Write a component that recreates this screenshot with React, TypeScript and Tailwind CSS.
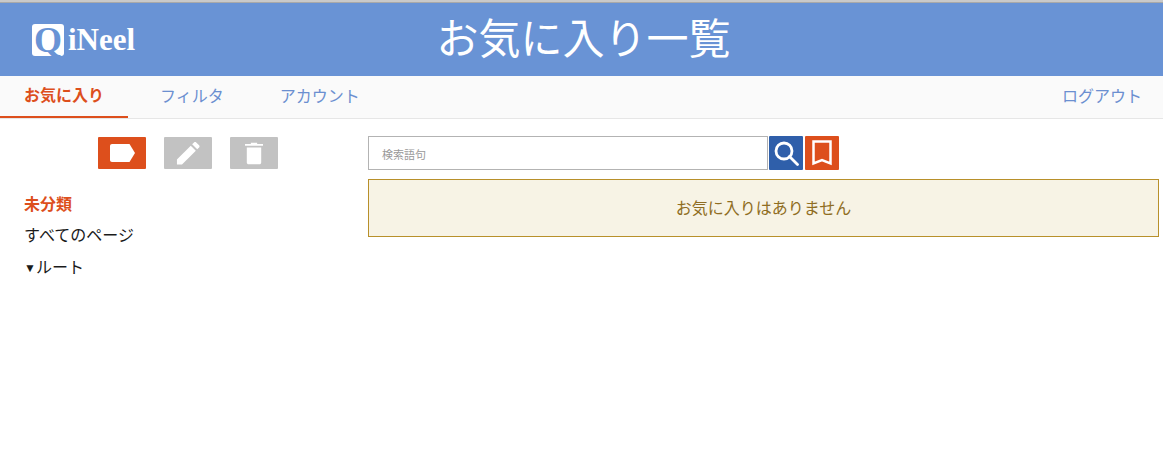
const jp = "font-['Liberation_Sans','Noto_Sans_CJK_JP',sans-serif]";

function Tab({ label, active }: { label: string; active?: boolean }) {
  return (
    <div
      className={
        active
          ? "h-[42px] px-6 flex items-center text-base font-bold text-[#dd4f1c] border-b-2 border-[#dd4f1c]"
          : "h-[42px] px-6 flex items-center text-base text-[#6b8fd0]"
      }
    >
      {label}
    </div>
  );
}

export default function App() {
  return (
    <div className={`${jp} w-[1163px] h-[450px] bg-white overflow-hidden`}>
      <div className="h-[3px] bg-[#c9c9c9] border-b border-[#a9a9a9]" />
      <header className="relative h-[73px] bg-[#6993d5] flex items-center justify-center">
        <div className="absolute left-8 top-[21px] flex items-center">
          <div className="w-8 h-8 rounded-[3px] bg-white flex items-center justify-center text-[#6993d5] text-[36px] leading-8 font-bold font-['Liberation_Serif',serif]">
            Q
          </div>
          <span className="ml-[4px] text-white text-[31px] leading-8 font-bold font-['Liberation_Serif',serif]">iNeel</span>
        </div>
        <h1 className="text-[42px] leading-[56px] font-normal text-white ml-[4px]">お気に入り一覧</h1>
      </header>
      <nav className="h-[43px] bg-[#fafafa] border-b border-[#e6e6e6] flex gap-2">
        <Tab label="お気に入り" active />
        <Tab label="フィルタ" />
        <Tab label="アカウント" />
        <div className="ml-auto pr-[21px] h-[42px] flex items-center text-base text-[#6b8fd0]">ログアウト</div>
      </nav>
      <div className="flex">
        <aside className="w-[368px] shrink-0 pt-[18px]">
          <div className="flex gap-[18px] pl-[98px]">
            <div className="w-12 h-8 rounded-[1px] bg-[#dd4f1c] flex items-center justify-center">
              <svg width="25" height="18" viewBox="0 0 25 18" fill="#fff">
                <path d="M2 0H19.500L25 9L19.500 18H2C.9 18 0 17.100 0 16V2C0 .9.9 0 2 0Z" />
              </svg>
            </div>
            <div className="w-12 h-8 rounded-[1px] bg-[#c2c2c2] flex items-center justify-center">
              <svg width="24" height="25" viewBox="0 0 26 26" fill="#fff">
                <path d="M1 25V19.500L16 4.500L21.500 10L6.500 25Z" />
                <path d="M17.500 3L19.500 1C20.200.3 21.200.3 21.900 1L25 4.100C25.700 4.800 25.700 5.800 25 6.500L23 8.500Z" />
              </svg>
            </div>
            <div className="w-12 h-8 rounded-[1px] bg-[#c2c2c2] flex items-center justify-center">
              <svg width="18" height="24" viewBox="0 0 20 26" fill="#fff">
                <path d="M0 3H6.500V1.500H13.500V3H20V5H0Z" />
                <path d="M2 7H18V23.500C18 24.600 17.100 25.500 16 25.500H4C2.900 25.500 2 24.600 2 23.500Z" />
              </svg>
            </div>
          </div>
          <ul className="mt-5 pl-6 text-base text-[#1a1a1a]">
            <li className="h-[31px] pt-px flex items-center font-bold text-[#dd4f1c]">未分類</li>
            <li className="h-8 flex items-center">すべてのページ</li>
            <li className="h-8 flex items-center">
              <span className="w-3 text-[12px] leading-none">▼</span>ルート
            </li>
          </ul>
        </aside>
        <main className="w-[791px] pt-[17px]">
          <div className="flex h-[34px]">
            <div className="w-[400px] h-[34px] border border-[#b3b3b3] pl-[13px] pt-[4px] flex items-center text-[11px] text-[#999999]">
              検索語句
            </div>
            <div className="ml-px w-[34px] h-[34px] rounded-[1px] bg-[#2f5faa] flex items-center justify-center">
              <svg width="25" height="25" viewBox="0 0 25 25" fill="none" stroke="#fff" strokeWidth="2.800">
                <circle cx="10" cy="10" r="8" />
                <path d="M15.500 15.500L23.500 23.500" strokeLinecap="round" />
              </svg>
            </div>
            <div className="ml-[2px] w-[34px] h-[34px] rounded-[1px] bg-[#dd4f1c] flex items-center justify-center">
              <svg width="20" height="26" viewBox="0 0 20 26" fill="none" stroke="#fff" strokeWidth="2.500">
                <path d="M1.500 1.500H18.500V23.500L10 20L1.500 23.500Z" />
              </svg>
            </div>
          </div>
          <div className="mt-[9px] h-[58px] border border-[#b8902a] bg-[#f7f3e5] pt-[1px] flex items-center justify-center text-base text-[#8f6d22]">
            お気に入りはありません
          </div>
        </main>
      </div>
    </div>
  );
}
